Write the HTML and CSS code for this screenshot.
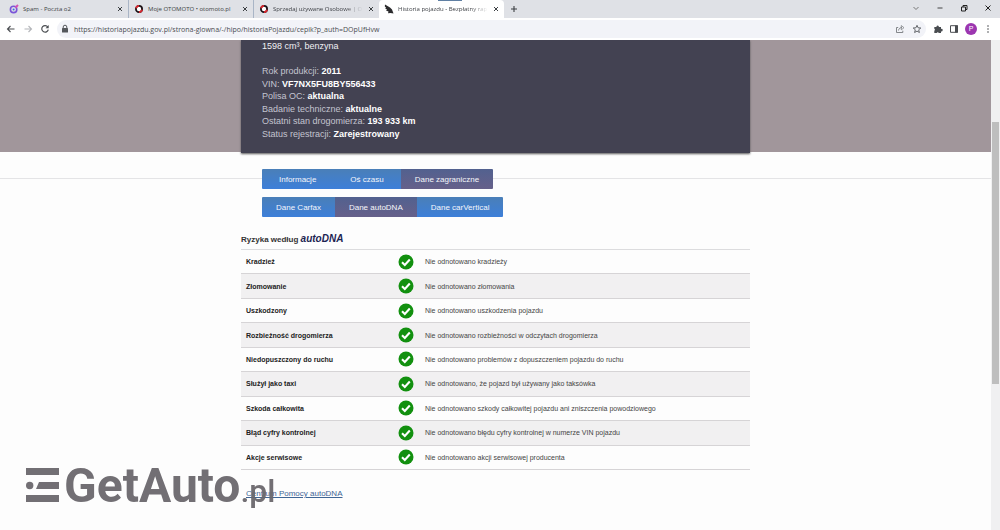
FILE: index.html
```html
<!DOCTYPE html>
<html lang="pl">
<head>
    <meta charset="UTF-8">
    <meta name="viewport" content="width=device-width, initial-scale=1.0">
    <title>Historia pojazdu - Bezpłatny raport</title>
    <link rel="stylesheet" href="styles.css">
</head>
<body>
    <svg class="symbols" aria-hidden="true">
        <symbol id="check" viewBox="0 0 16 16">
            <circle cx="8" cy="8" r="7.5" fill="#12900f"/>
            <path d="M4 8.2l2.8 2.7 5-5.4" fill="none" stroke="#fff" stroke-width="2.1"/>
        </symbol>
        <symbol id="otomoto" viewBox="0 0 10 10">
            <circle cx="5" cy="5" r="3.1" fill="#fff" stroke="#1d1418" stroke-width="1.8"/>
            <path d="M2 4.2A3.1 3.1 0 0 1 5 1.9M8 5.8A3.1 3.1 0 0 1 5 8.1" fill="none" stroke="#d9262e" stroke-width="1.8"/>
        </symbol>
        <symbol id="close" viewBox="0 0 8 8">
            <path d="M2 2l4 4M6 2L2 6" fill="none" stroke="#3c4043" stroke-width="1"/>
        </symbol>
    </svg>

    <div class="browser">
        <header class="tab-strip">
            <div class="tab">
                <svg class="favicon" viewBox="0 0 10 10"><circle cx="4.6" cy="5.4" r="3.2" fill="none" stroke="#7a55d8" stroke-width="1.6"/><circle cx="4.6" cy="5.4" r="1" fill="#3b6fe0"/><path d="M6.5 3.5L9 1" stroke="#d552b5" stroke-width="2"/></svg>
                <span class="tab-title">Spam - Poczta o2</span>
                <button class="tab-close" aria-label="Zamknij kartę"><svg><use href="#close"/></svg></button>
            </div>
            <div class="tab">
                <svg class="favicon"><use href="#otomoto"/></svg>
                <span class="tab-title">Moje OTOMOTO • otomoto.pl</span>
                <button class="tab-close" aria-label="Zamknij kartę"><svg><use href="#close"/></svg></button>
            </div>
            <div class="tab">
                <svg class="favicon"><use href="#otomoto"/></svg>
                <span class="tab-title">Sprzedaj używane Osobowe | O</span>
                <button class="tab-close" aria-label="Zamknij kartę"><svg><use href="#close"/></svg></button>
            </div>
            <div class="tab active">
                <svg class="favicon" viewBox="0 0 10 10"><path d="M1 0.5L6 3.5 8 5.5 9.5 9.5 6.5 9 4 9.2 4.5 7.5 2 6.5 3 5.5 1.2 4.5 2 3.5 0.8 2.5z" fill="#2b2b2d"/></svg>
                <span class="tab-title">Historia pojazdu - Bezpłatny rap</span>
                <button class="tab-close" aria-label="Zamknij kartę"><svg><use href="#close"/></svg></button>
            </div>
            <button class="new-tab" aria-label="Nowa karta"><svg viewBox="0 0 10 10"><path d="M5 2v6M2 5h6" stroke="#3c4043" stroke-width="1.1"/></svg></button>
            <div class="window-buttons">
                <button aria-label="Szukaj kart"><svg viewBox="0 0 10 10"><path d="M2.5 4L5 6.5 7.5 4" fill="none" stroke="#777" stroke-width="1"/></svg></button>
                <button aria-label="Minimalizuj"><svg viewBox="0 0 10 10"><path d="M2.5 5h5" stroke="#333" stroke-width="0.9"/></svg></button>
                <button aria-label="Przywróć"><svg viewBox="0 0 10 10"><path d="M2.5 4h4v4h-4zM4 4V2.5h4v4H6.5" fill="none" stroke="#222" stroke-width="1"/></svg></button>
                <button aria-label="Zamknij"><svg viewBox="0 0 10 10"><path d="M2.5 2.5l5 5M7.5 2.5l-5 5" stroke="#222" stroke-width="1"/></svg></button>
            </div>
        </header>

        <nav class="toolbar">
            <button aria-label="Wstecz"><svg viewBox="0 0 10 10"><path d="M8.5 5h-7M4.5 2L1.5 5l3 3" fill="none" stroke="#4a4d51" stroke-width="1.1"/></svg></button>
            <button aria-label="Dalej"><svg viewBox="0 0 10 10"><path d="M1.5 5h7M5.5 2l3 3-3 3" fill="none" stroke="#b4b6ba" stroke-width="1.1"/></svg></button>
            <button aria-label="Odśwież"><svg viewBox="0 0 10 10"><path d="M7.8 3A3.3 3.3 0 1 0 8.3 5.6" fill="none" stroke="#4a4d51" stroke-width="1.2"/><path d="M8.7 1v3.2H5.5z" fill="#4a4d51"/></svg></button>
            <div class="address">
                <svg viewBox="0 0 10 10"><path d="M3.2 4.5V3a1.8 1.8 0 0 1 3.6 0v1.5" fill="none" stroke="#55585c" stroke-width="1"/><rect x="2" y="4" width="6" height="4.500" rx="0.6" fill="#55585c"/></svg>
                <input type="text" aria-label="Adres" value="https://historiapojazdu.gov.pl/strona-glowna/-/hipo/historiaPojazdu/cepik?p_auth=DOpUfHvw">
                <div class="address-actions">
                    <button aria-label="Udostępnij"><svg viewBox="0 0 10 10"><path d="M3.2 3.5H1.5v5h6.3V6.7M3.5 6.5C3.8 4.5 5 3.6 7 3.6" fill="none" stroke="#777a7e" stroke-width="0.9"/><path d="M6.3 1.5l2.7 2.2-2.7 2.1z" fill="none" stroke="#777a7e" stroke-width="0.7"/></svg></button>
                    <button aria-label="Dodaj do zakładek"><svg viewBox="0 0 10 10"><path d="M5 1.3l1.1 2.5 2.7.2-2.1 1.8.7 2.7L5 7.1 2.6 8.5l.7-2.7L1.2 4l2.7-.2z" fill="none" stroke="#55585c" stroke-width="0.9"/></svg></button>
                </div>
            </div>
            <div class="extensions">
                <button aria-label="Rozszerzenia"><svg viewBox="0 0 10 10"><path d="M1.3 3h2.2a1.2 1.2 0 1 1 2.3 0H8v2a1.2 1.2 0 1 1 0 2.2V9H5.8a1.1 1.1 0 0 0-2.1 0H1.3V6.8a1.1 1.1 0 0 0 0-2z" fill="#4a4d51"/></svg></button>
                <button aria-label="Panel boczny"><svg viewBox="0 0 10 10"><path d="M1.5 1.7h7v6.6h-7z" fill="none" stroke="#4a4d51" stroke-width="1"/><path d="M6 1.5h3v7H6z" fill="#4a4d51"/></svg></button>
                <button class="profile">P</button>
                <button aria-label="Menu"><svg viewBox="0 0 10 10" fill="#4a4d51"><circle cx="5" cy="2" r="0.8"/><circle cx="5" cy="5" r="0.8"/><circle cx="5" cy="8" r="0.8"/></svg></button>
            </div>
        </nav>

        <div class="viewport">
            <main class="page">
                <section class="hero">
                    <div class="vehicle">
                        <p class="engine">1598 cm³, benzyna</p>
                        <div class="specs">
                            <p>Rok produkcji: <strong>2011</strong></p>
                            <p>VIN: <strong>VF7NX5FU8BY556433</strong></p>
                            <p>Polisa OC: <strong>aktualna</strong></p>
                            <p>Badanie techniczne: <strong>aktualne</strong></p>
                            <p>Ostatni stan drogomierza: <strong>193 933 km</strong></p>
                            <p>Status rejestracji: <strong>Zarejestrowany</strong></p>
                        </div>
                    </div>
                </section>

                <div class="main-tabs">
                    <div class="column">
                        <div class="button-group">
                            <button class="wide">Informacje</button>
                            <button class="wide">Oś czasu</button>
                            <button class="selected">Dane zagraniczne</button>
                        </div>
                    </div>
                </div>
                <div class="column">
                    <div class="button-group sub-tabs">
                        <button>Dane Carfax</button>
                        <button class="selected">Dane autoDNA</button>
                        <button>Dane carVertical</button>
                    </div>

                    <h2>Ryzyka według <span class="autodna">autoDNA</span></h2>
                    <table class="risks">
                        <tbody>
                            <tr><th scope="row">Kradzież</th><td class="status"><svg><use href="#check"/></svg></td><td>Nie odnotowano kradzieży</td></tr>
                            <tr><th scope="row">Złomowanie</th><td class="status"><svg><use href="#check"/></svg></td><td>Nie odnotowano złomowania</td></tr>
                            <tr><th scope="row">Uszkodzony</th><td class="status"><svg><use href="#check"/></svg></td><td>Nie odnotowano uszkodzenia pojazdu</td></tr>
                            <tr><th scope="row">Rozbieżność drogomierza</th><td class="status"><svg><use href="#check"/></svg></td><td>Nie odnotowano rozbieżności w odczytach drogomierza</td></tr>
                            <tr><th scope="row">Niedopuszczony do ruchu</th><td class="status"><svg><use href="#check"/></svg></td><td>Nie odnotowano problemów z dopuszczeniem pojazdu do ruchu</td></tr>
                            <tr><th scope="row">Służył jako taxi</th><td class="status"><svg><use href="#check"/></svg></td><td>Nie odnotowano, że pojazd był używany jako taksówka</td></tr>
                            <tr><th scope="row">Szkoda całkowita</th><td class="status"><svg><use href="#check"/></svg></td><td>Nie odnotowano szkody całkowitej pojazdu ani zniszczenia powodziowego</td></tr>
                            <tr><th scope="row">Błąd cyfry kontrolnej</th><td class="status"><svg><use href="#check"/></svg></td><td>Nie odnotowano błędu cyfry kontrolnej w numerze VIN pojazdu</td></tr>
                            <tr><th scope="row">Akcje serwisowe</th><td class="status"><svg><use href="#check"/></svg></td><td>Nie odnotowano akcji serwisowej producenta</td></tr>
                        </tbody>
                    </table>
                    <a class="help" href="#">Centrum Pomocy autoDNA</a>
                </div>
            </main>
            <div class="scrollbar"><div class="thumb"></div></div>
        </div>
    </div>

    <div class="watermark">
        <svg viewBox="0 0 33 34" fill="currentColor"><path d="M0 0h33v7H0zM13 14h20v7H10zM0 27h33v7H0z"/><circle cx="3.700" cy="17.500" r="3.700"/></svg>
        <span class="brand">GetAuto</span><span class="domain">.pl</span>
    </div>
</body>
</html>
```
FILE: styles.css
```css
* {
    box-sizing: border-box;
}
body {
    margin: 0;
    background: #fdfdfd;
    font-family: "Liberation Sans", Arial, sans-serif;
    color: #333;
}
button {
    border: none;
    padding: 0;
    background: none;
    font-family: inherit;
    cursor: pointer;
}
svg {
    display: block;
    flex: none;
}
p, h2 {
    margin: 0;
}
.symbols {
    position: absolute;
    width: 0;
    height: 0;
}
.browser {
    display: flex;
    flex-direction: column;
    height: 100vh;
    overflow: hidden;
}

/* karty przeglądarki */
.tab-strip {
    display: flex;
    flex: none;
    height: 18px;
    padding-left: 4px;
    background: #dfe1e6;
    font-family: "Open Sans", "Noto Sans", sans-serif;
}
.tab {
    position: relative;
    display: flex;
    align-items: center;
    width: 125px;
    padding: 0 4px 0 5px;
    border-right: 1px solid #a9b5c6;
    gap: 4px;
}
.tab.active {
    background: #fff;
    border-radius: 4px 4px 0 0;
    border-right: none;
}
.tab.active::before {
    content: "";
    position: absolute;
    top: 0;
    left: 59px;
    width: 24px;
    height: 1px;
    background: #5f7fa3;
}
.tab:nth-child(3) {
    border-right: none;
}
.favicon {
    width: 10px;
    height: 10px;
}
.tab-title {
    flex: 1;
    white-space: nowrap;
    font-size: 6px;
    line-height: 12px;
    color: #3c3f44;
}
.tab:nth-child(n+3) .tab-title {
    -webkit-mask-image: linear-gradient(to right, #000 80%, transparent);
    mask-image: linear-gradient(to right, #000 80%, transparent);
}
.tab-close svg {
    width: 8px;
    height: 8px;
}
.new-tab {
    padding-left: 5px;
}
.new-tab svg {
    width: 10px;
    height: 10px;
}
.window-buttons {
    display: flex;
    align-items: center;
    gap: 14px;
    margin-left: auto;
    padding: 0 7px 2px 0;
}
.window-buttons svg {
    width: 10px;
    height: 10px;
}

/* pasek adresu */
.toolbar {
    display: flex;
    flex: none;
    align-items: center;
    gap: 7px;
    height: 22px;
    padding: 0 7px 0 6px;
    background: #fff;
}
.toolbar svg {
    width: 10px;
    height: 10px;
}
.address {
    display: flex;
    flex: 1;
    align-items: center;
    gap: 4px;
    height: 18px;
    padding: 0 4px 0 3px;
    border-radius: 9px;
    background: #f2f3f8;
}
.address input {
    flex: 1;
    min-width: 0;
    padding: 0;
    border: none;
    outline: none;
    background: none;
    font-family: "Open Sans", "Noto Sans", sans-serif;
    font-size: 7px;
    color: #4a4d51;
}
.address-actions {
    display: flex;
    gap: 7px;
}
.extensions {
    display: flex;
    align-items: center;
    gap: 6px;
}
.profile {
    width: 12px;
    height: 12px;
    border-radius: 50%;
    background: #9c36b0;
    color: #fff;
    font-size: 7px;
    line-height: 12px;
}

/* strona */
.viewport {
    display: flex;
    flex: 1;
    min-height: 0;
}
.page {
    flex: 1;
    min-width: 0;
    overflow: hidden;
}
.scrollbar {
    flex: none;
    width: 9px;
    padding: 82px 1px 0;
    background: #f0f0f1;
}
.thumb {
    height: 262px;
    background: #bebebe;
}
.column {
    width: 509px;
    margin: 0 auto;
}
.hero {
    height: 112px;
    background: #a1969b;
}
.vehicle {
    width: 509px;
    height: 113px;
    margin: 0 auto;
    padding: 0 21px;
    background: #434252;
    box-shadow: 0 1px 2px #555;
    font-size: 9px;
    line-height: 12px;
    color: #c3c4d0;
}
.vehicle strong {
    color: #fff;
}
.vehicle .engine {
    margin-bottom: 13px;
    color: #f0f0f4;
}
.specs {
    display: flex;
    flex-direction: column;
    justify-content: space-between;
    height: 75px;
}
.main-tabs {
    padding-top: 17px;
    background: linear-gradient(#e4e4e6, #e4e4e6) 0 26px / 100% 1px no-repeat;
}
.button-group {
    display: flex;
    width: max-content;
    margin-left: 21px;
    border-radius: 1px;
    overflow: hidden;
}
.button-group button {
    height: 20px;
    padding: 0 14px;
    background: linear-gradient(#4a7fb8, #3d7fd9);
    color: #f4f6fb;
    font-size: 8px;
}
.button-group .wide {
    padding: 0 17px;
}
.button-group .selected {
    background: linear-gradient(#52618f, #66608a);
}
.sub-tabs {
    margin-top: 8px;
}
h2 {
    margin-top: 15px;
    font-size: 8px;
    line-height: 14px;
    color: #333;
}
.autodna {
    font-size: 10px;
    font-style: italic;
    color: #1c2452;
}
.risks {
    width: 100%;
    height: 221px;
    margin-top: 2px;
    border-collapse: collapse;
    border-top: 1px solid #dcdcde;
    font-size: 7px;
}
.risks tr {
    border-bottom: 1px solid #d6d4d6;
}
.risks tr:nth-child(even) {
    background: #f1f0f1;
}
.risks th {
    width: 152px;
    padding: 0 0 0 5px;
    text-align: left;
    color: #222;
}
.risks td {
    padding: 0;
    color: #444;
}
.risks .status {
    width: 32px;
    padding-left: 5px;
}
.status svg {
    width: 16px;
    height: 16px;
}
.help {
    display: inline-block;
    margin: 18px 0 0 5px;
    font-size: 8px;
    line-height: 12px;
    color: #3f6595;
}

/* znak wodny */
.watermark {
    position: absolute;
    left: 26px;
    bottom: 15px;
    display: flex;
    align-items: baseline;
    color: #6b686d;
    font-family: Roboto, "Liberation Sans", sans-serif;
    line-height: 48px;
    opacity: 0.95;
    pointer-events: none;
}
.watermark svg {
    width: 33px;
    height: 34px;
    margin-right: 5px;
}
.brand {
    font-size: 48px;
    font-weight: 700;
}
.domain {
    font-size: 32px;
    font-weight: 500;
}
```
